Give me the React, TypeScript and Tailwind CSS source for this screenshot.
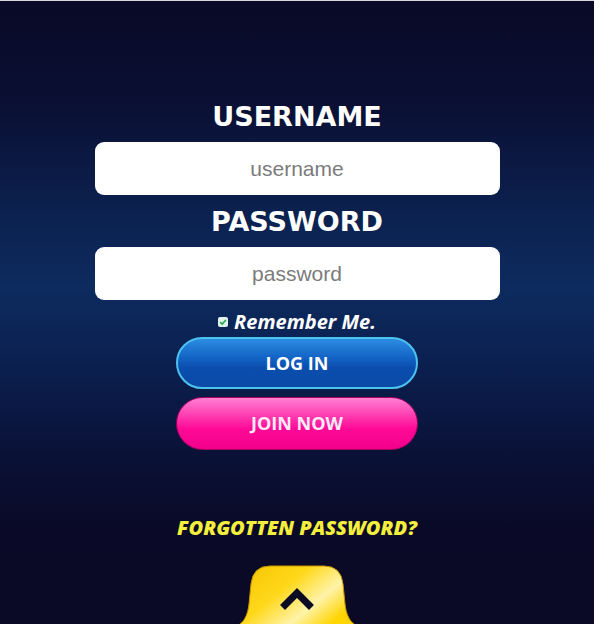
import { useState } from 'react'

export default function App() {
  const [remember, setRemember] = useState(true)

  return (
    <div className="relative min-h-[624px] w-full overflow-hidden border-t border-[#d8d8dc] bg-[linear-gradient(180deg,#090a26_0%,#0a0f33_16%,#0c2352_36%,#0d2b5e_46%,#0b2050_58%,#0a1238_72%,#0a0a28_84%,#0a0a26_100%)]">
      <div className="flex flex-col items-center pt-[99px]">
        {/* Username */}
        <h2 className="font-['DejaVu_Sans',Verdana,sans-serif] text-[27px] leading-[34px] font-bold text-white">
          USERNAME
        </h2>
        <input
          type="text"
          placeholder="username"
          className="mt-[8px] h-[53px] w-[405px] rounded-[9px] bg-white text-center font-['Liberation_Sans',Arial,sans-serif] text-[21px] text-[#555] placeholder:text-[#7b7b7b] outline-none"
        />

        {/* Password */}
        <h2 className="mt-[10px] font-['DejaVu_Sans',Verdana,sans-serif] text-[27px] leading-[34px] font-bold text-white">
          PASSWORD
        </h2>
        <input
          type="password"
          placeholder="password"
          className="mt-[8px] h-[53px] w-[405px] rounded-[9px] bg-white text-center font-['Liberation_Sans',Arial,sans-serif] text-[21px] text-[#555] placeholder:text-[#7b7b7b] outline-none"
        />

        {/* Remember me */}
        <label
          className="mt-[10px] flex h-[24px] cursor-pointer items-center gap-[6px] font-['Open_Sans',sans-serif] text-[20px] font-bold italic text-white"
          onClick={() => setRemember(!remember)}
        >
          <span className="flex h-[10px] w-[10px] items-center justify-center rounded-[2px] bg-[#dff3ea]">
            {remember && (
              <svg viewBox="0 0 10 10" className="h-[8px] w-[8px]">
                <path d="M1.5 5.2 L4 7.6 L8.6 2.6" fill="none" stroke="#1faa55" strokeWidth="2" />
              </svg>
            )}
          </span>
          Remember Me.
        </label>

        {/* Buttons */}
        <button className="mt-[3px] flex h-[52px] w-[242px] items-center justify-center rounded-full border-2 border-[#4cc2ef] bg-[linear-gradient(180deg,#2c8de2_0%,#1262c4_40%,#0a4eae_60%,#0b4aa6_100%)] font-['Open_Sans',sans-serif] text-[18px] font-bold text-white">
          LOG IN
        </button>
        <button className="mt-[8px] flex h-[53px] w-[242px] items-center justify-center rounded-full border border-[#a8005f] bg-[linear-gradient(180deg,#ff7fd2_0%,#ff3cb0_35%,#ff0a98_60%,#f2008c_100%)] font-['Open_Sans',sans-serif] text-[18px] font-bold text-[#fdeaf6]">
          JOIN NOW
        </button>

        {/* Forgotten */}
        <a
          href="#"
          className="mt-[65px] h-[26px] font-['Open_Sans',sans-serif] text-[20px] leading-[26px] font-extrabold italic text-[#f4ee3c]"
        >
          FORGOTTEN PASSWORD?
        </a>

        {/* Back to top tab */}
        <button className="mt-[23px] block h-[60px] w-[130px]">
          <svg viewBox="0 0 130 62" className="h-[62px] w-[130px]">
            <defs>
              <linearGradient id="bell" x1="0" y1="0" x2="1" y2="0.6">
                <stop offset="0" stopColor="#f5c400" />
                <stop offset="0.45" stopColor="#ffd81a" />
                <stop offset="0.75" stopColor="#fff3a8" />
                <stop offset="1" stopColor="#ffd400" />
              </linearGradient>
            </defs>
            <path
              d="M4 62 C12 60 16 50 17 40 L19 20 Q21 2 38 2 L92 2 Q109 2 111 20 L113 40 C114 50 118 60 126 62 Z"
              fill="url(#bell)"
              stroke="#c79300"
              strokeWidth="1"
            />
            <path d="M53 41 L65 29 L77 41" fill="none" stroke="#0b0b24" strokeWidth="7" strokeLinecap="square" />
          </svg>
        </button>
      </div>
    </div>
  )
}
